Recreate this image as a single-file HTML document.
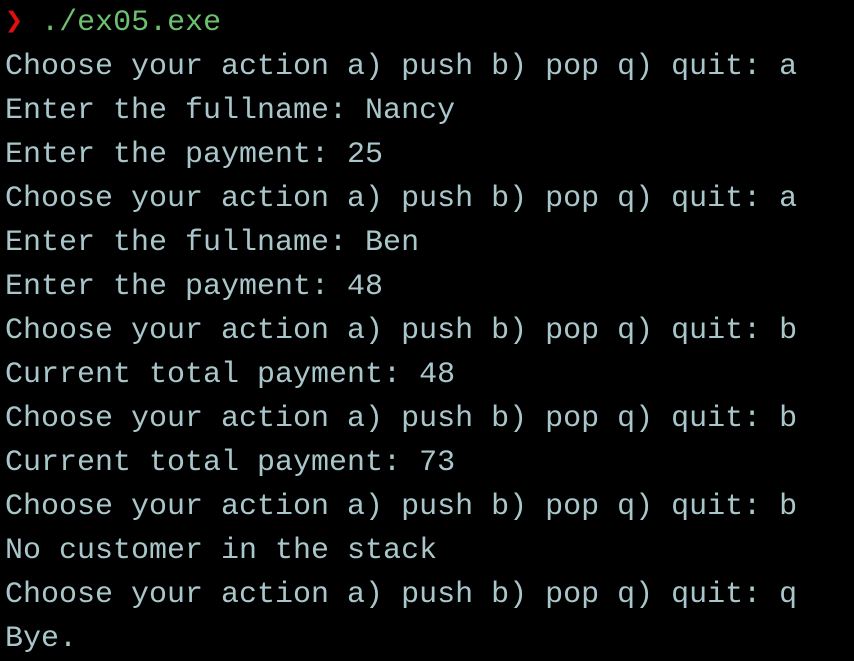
<!DOCTYPE html><html><head><style>
html,body{margin:0;background:#000;width:854px;height:652px;overflow:hidden}
pre{margin:0;position:absolute;left:5px;top:1px;font-family:"Liberation Mono","DejaVu Sans Mono",monospace;font-size:30px;line-height:44px;color:#a9c7cb}
.r{color:#e0100f}.g{color:#6dc06f}
</style></head><body><pre><span class="r">❯</span> <span class="g">./ex05.exe</span>
Choose your action a) push b) pop q) quit: a
Enter the fullname: Nancy
Enter the payment: 25
Choose your action a) push b) pop q) quit: a
Enter the fullname: Ben
Enter the payment: 48
Choose your action a) push b) pop q) quit: b
Current total payment: 48
Choose your action a) push b) pop q) quit: b
Current total payment: 73
Choose your action a) push b) pop q) quit: b
No customer in the stack
Choose your action a) push b) pop q) quit: q
Bye.</pre></body></html>
